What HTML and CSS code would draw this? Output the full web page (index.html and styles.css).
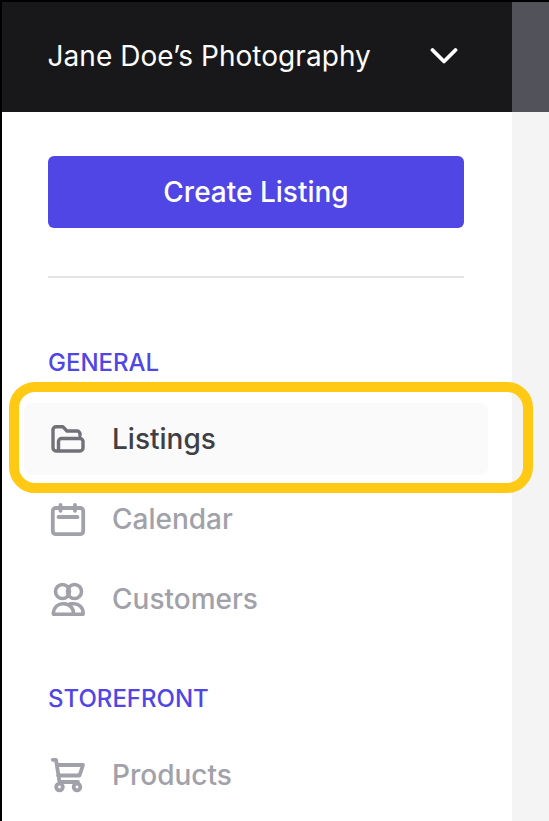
FILE: index.html
```html
<!DOCTYPE html>
<html lang="en">
<head>
<meta charset="utf-8">
<title>Jane Doe's Photography</title>
<link rel="stylesheet" href="styles.css">
</head>
<body>
<div class="app">
  <aside class="sidebar">
    <header class="brand">
      <span class="brand-name">Jane Doe’s Photography</span>
      <svg class="chevron" viewBox="0 0 28 18" width="28" height="18" fill="none" stroke="#fff" stroke-width="3.8" stroke-linecap="round" stroke-linejoin="round"><path d="M2.500 3 14 14.500 25.500 3"/></svg>
    </header>
    <div class="panel">
      <button class="create">Create Listing</button>
      <hr class="divider">
      <h2 class="section">GENERAL</h2>
      <nav class="nav">
        <a class="item active">
          <svg class="icon" viewBox="0 0 36 36" fill="none" stroke="currentColor" stroke-width="3.4" stroke-linejoin="round" stroke-linecap="round"><path d="M30 14.500V13a3 3 0 0 0-3-3H17L13 5.800H6a3 3 0 0 0-3 3V27a3 3 0 0 0 3 3H30a3 3 0 0 0 3-3V20.500a3 3 0 0 0-3-3H11.500a3 3 0 0 0-3 3V30"/></svg>
          <span>Listings</span>
        </a>
        <span class="ring"></span>
        <a class="item">
          <svg class="icon" viewBox="0 0 36 36" fill="none" stroke="currentColor" stroke-width="3.8" stroke-linecap="round" stroke-linejoin="round"><rect x="2.800" y="7" width="30.400" height="26.200" rx="3"/><path d="M10.500 3.800v6M25 3.800v6M8.500 16h19"/></svg>
          <span>Calendar</span>
        </a>
        <a class="item">
          <svg class="icon" viewBox="0 0 36 36" fill="none" stroke="currentColor" stroke-width="3.6" stroke-linecap="round" stroke-linejoin="round"><circle cx="12.500" cy="10.500" r="7"/><circle cx="24.500" cy="10.500" r="7"/><path d="M3.400 33.200V31.500a9.500 9.500 0 0 1 9.500-8.800h1a9.500 9.500 0 0 1 9.500 10.500ZM23.500 33.200H33.100V31.500A9 9 0 0 0 24 22.700H20"/></svg>
          <span>Customers</span>
        </a>
      </nav>
      <h2 class="section section-store">STOREFRONT</h2>
      <nav class="nav">
        <a class="item">
          <svg class="icon" viewBox="0 0 36 36" fill="none" stroke="currentColor" stroke-width="3.8" stroke-linecap="round" stroke-linejoin="round"><path d="M2.800 2.800H6L9.500 25H28M7 8H33L29.500 18.500H8"/><circle cx="9.500" cy="30" r="3.300"/><circle cx="27" cy="30" r="3.300"/></svg>
          <span>Products</span>
        </a>
      </nav>
    </div>
  </aside>
  <div class="main">
    <div class="main-top"></div>
  </div>
</div>
</body>
</html>
```
FILE: styles.css
```css
* { box-sizing: border-box; }
html, body { margin: 0; height: 100%; overflow: hidden; }
body {
  background: #000;
  padding: 2px 0 0 2px;
  font-family: Inter, "Liberation Sans", sans-serif;
}
.app { display: flex; height: 100%; }
.sidebar { width: 510px; flex: none; background: #fff; display: flex; flex-direction: column; position: relative; }
.brand {
  flex: none;
  height: 110px;
  background: #18181b;
  color: #fff;
  display: flex;
  align-items: center;
  justify-content: space-between;
  padding: 0 54px 2px 45.500px;
}
.brand-name { font-size: 28px; font-weight: 400; line-height: 36px; letter-spacing: 0.05px; }
.panel { padding: 44px 22px 0 22px; position: relative; flex: none; }
.create {
  display: block;
  width: 416px;
  height: 72px;
  margin-left: 24px;
  background: #4f46e5;
  color: #fff;
  border: 0;
  border-radius: 6px;
  font: 500 28px/36px Inter, "Liberation Sans", sans-serif;
}
.divider { width: 416px; height: 2px; margin: 48px 0 0 24px; border: 0; background: #e4e4e7; }
.section {
  margin: 71px 0 0 24px;
  font-size: 24px;
  line-height: 28px;
  font-weight: 500;
  color: #4f46e5;
}
.section-store { margin-top: 50px; }
.nav { display: flex; flex-direction: column; gap: 8px; }
.section + .nav { margin-top: 26px; }
.item {
  display: flex;
  align-items: center;
  height: 72px;
  width: 464px;
  padding-left: 26px;
  gap: 26px;
  border-radius: 8px;
  color: #a1a1aa;
  font-size: 28px;
  font-weight: 500;
  line-height: 36px;
}
.item.active { background: #fafafa; color: #3f3f46; }
.item.active .icon { color: #71717a; }
.icon { width: 36px; height: 36px; flex: none; }
.ring {
  position: absolute;
  left: 7px;
  top: 270px;
  width: 524px;
  height: 111px;
  border: 10px solid #ffc914;
  border-radius: 26px;
}
.main { flex: 1; background: #f4f4f5; }
.main-top { height: 110px; background: #52525b; }
```
